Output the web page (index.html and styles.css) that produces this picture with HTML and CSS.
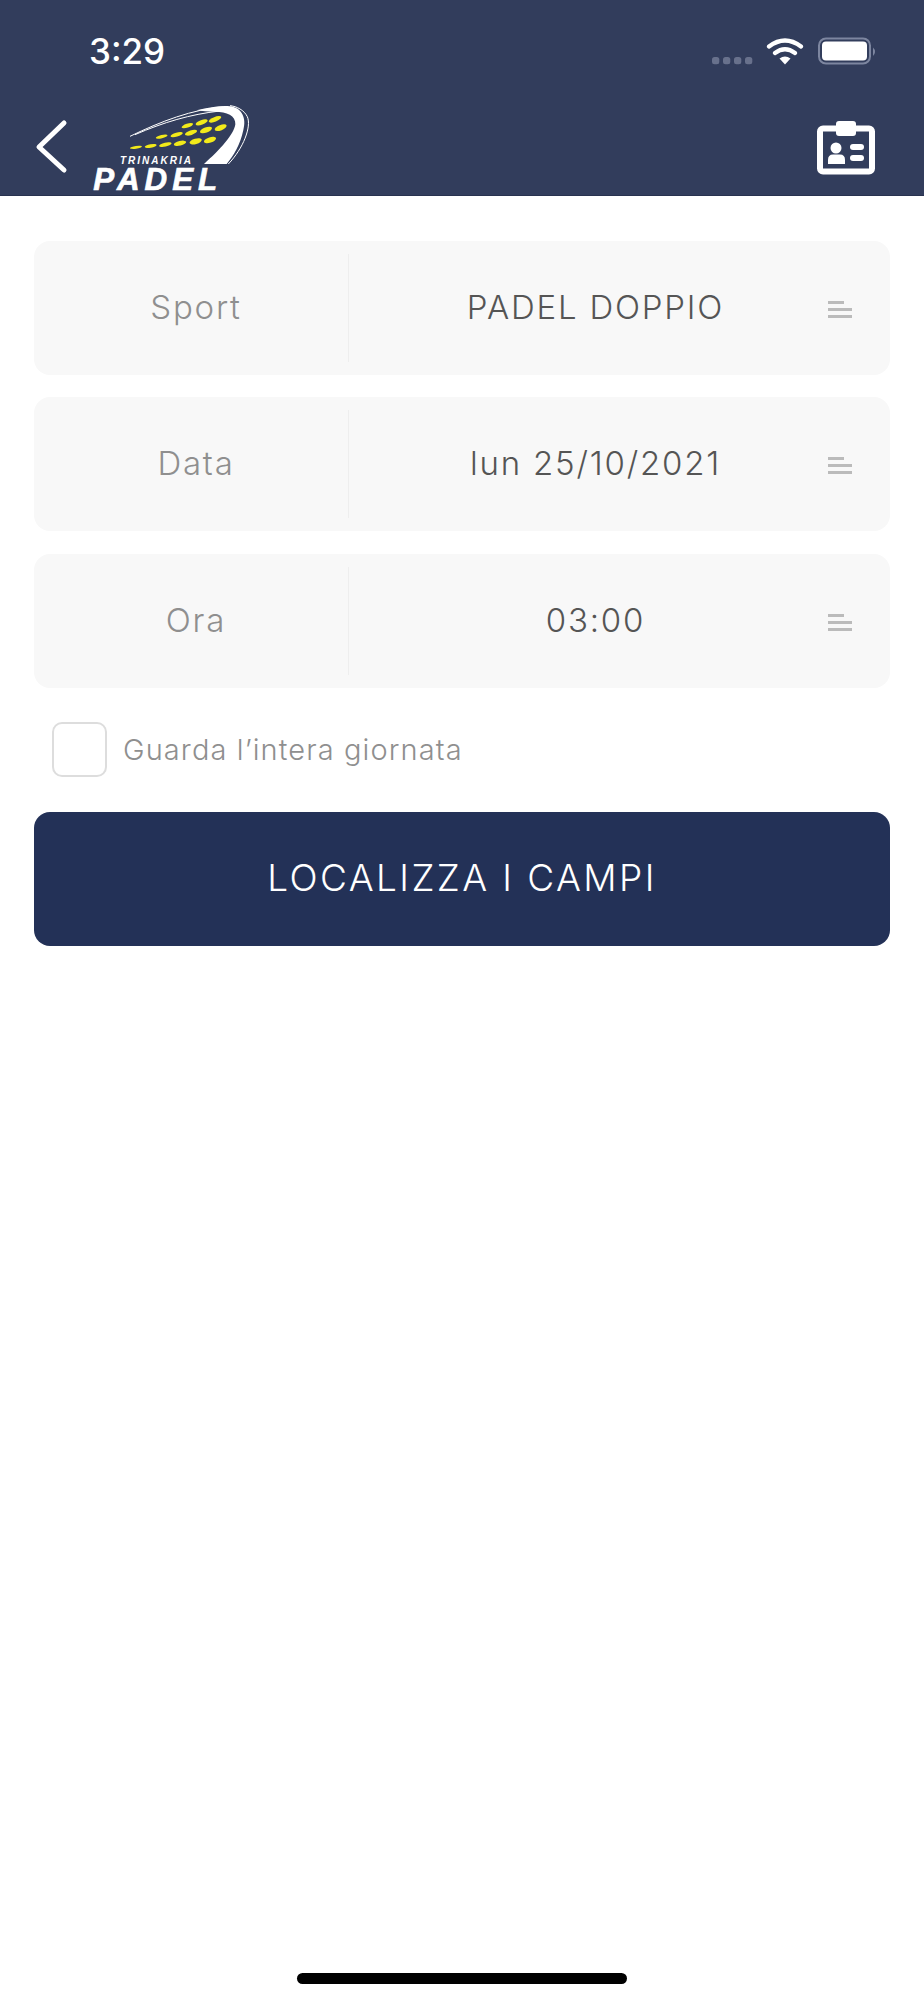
FILE: index.html
```html
<!DOCTYPE html>
<html lang="it">
<head>
    <meta charset="UTF-8">
    <meta name="viewport" content="width=device-width, initial-scale=1.0">
    <title>Trinakria Padel</title>
    <link rel="stylesheet" href="styles.css">
</head>
<body>
    <header class="top">
        <div class="status">
            <span class="time">3:29</span>
            <svg class="status-icons" width="165" height="30" viewBox="0 0 165 30">
                <rect x="0" y="21" width="7.3" height="7.3" rx="2.5" fill="#68718c"/>
                <rect x="11" y="21" width="7.3" height="7.3" rx="2.5" fill="#68718c"/>
                <rect x="22" y="21" width="7.3" height="7.3" rx="2.5" fill="#68718c"/>
                <rect x="33" y="21" width="7.3" height="7.3" rx="2.5" fill="#68718c"/>
                <path d="M57 10.5Q73-1.5 89 10.5M63 17Q73 9.5 83 17" fill="none" stroke="#fff" stroke-width="4.2" stroke-linecap="round"/>
                <path d="M67.5 22.5Q73 18.5 78.500 22.500L73 28.500Z" fill="#fff"/>
                <rect x="107" y="2.500" width="51" height="25" rx="7" fill="none" stroke="#7d86a0" stroke-width="2"/>
                <rect x="110" y="5.500" width="45" height="19" rx="4" fill="#fff"/>
                <path d="M161 11.500Q165 15.500 161 20Z" fill="#7d86a0"/>
            </svg>
        </div>
        <nav class="nav">
            <svg class="back" width="36" height="56" viewBox="0 0 36 56">
                <path d="M31 4 6 28 31 51" fill="none" stroke="#fff" stroke-width="5" stroke-linecap="round" stroke-linejoin="round"/>
            </svg>
            <svg class="logo" width="180" height="100" viewBox="0 0 540 300">
                <!-- racchetta -->
                <path d="M350 46C390 36 425 31 450 34C486 38 500 70 490 105C480 150 462 180 440 207L372 207C420 165 462 118 466 88C468 62 440 50 405 50C385 50 365 48 350 46Z" fill="#fff"/>
                <path d="M150 124C240 80 340 42 430 36M165 119C250 82 330 58 420 48M445 207C490 160 515 95 502 65C492 45 470 34 450 32" fill="none" stroke="#fff" stroke-width="3"/>
                <g fill="#f2ea1a">
                    <ellipse cx="405" cy="73" rx="20" ry="7" transform="rotate(-22 405 73)"/>
                    <ellipse cx="365" cy="82" rx="19" ry="7" transform="rotate(-20 365 82)"/>
                    <ellipse cx="322" cy="92" rx="18" ry="6" transform="rotate(-18 322 92)"/>
                    <ellipse cx="422" cy="98" rx="19" ry="8" transform="rotate(-22 422 98)"/>
                    <ellipse cx="378" cy="105" rx="19" ry="8" transform="rotate(-20 378 105)"/>
                    <ellipse cx="333" cy="113" rx="19" ry="7" transform="rotate(-18 333 113)"/>
                    <ellipse cx="290" cy="119" rx="19" ry="6" transform="rotate(-16 290 119)"/>
                    <ellipse cx="245" cy="125" rx="18" ry="5" transform="rotate(-14 245 125)"/>
                    <ellipse cx="390" cy="135" rx="19" ry="8" transform="rotate(-18 390 135)"/>
                    <ellipse cx="347" cy="139" rx="19" ry="8" transform="rotate(-16 347 139)"/>
                    <ellipse cx="300" cy="145" rx="19" ry="7" transform="rotate(-14 300 145)"/>
                    <ellipse cx="256" cy="149" rx="19" ry="6" transform="rotate(-12 256 149)"/>
                    <ellipse cx="212" cy="153" rx="18" ry="5" transform="rotate(-10 212 153)"/>
                    <ellipse cx="168" cy="157" rx="18" ry="4" transform="rotate(-8 168 157)"/>
                </g>
                <text class="logo-small" x="120" y="207">TRINAKRIA</text>
                <text class="logo-big" x="40" y="286">PADEL</text>
            </svg>
            <svg class="card" width="58" height="54" viewBox="0 0 58 54">
                <rect x="3" y="7.500" width="52" height="43" rx="3" fill="none" stroke="#fff" stroke-width="6"/>
                <rect x="19" y="0" width="20" height="15" rx="3" fill="#fff"/>
                <circle cx="19" cy="27" r="5.500" fill="#fff"/>
                <path d="M11 43V39Q11 33.500 16 33.500H23Q28 33.500 28 39V43Z" fill="#fff"/>
                <rect x="33" y="23" width="14" height="6" rx="3" fill="#fff"/>
                <rect x="33" y="34" width="14" height="6" rx="3" fill="#fff"/>
            </svg>
        </nav>
    </header>

    <main class="form">
        <div class="row">
            <div class="row-label">Sport</div>
            <div class="row-value">PADEL DOPPIO</div>
            <span class="menu"><i class="short"></i><i></i><i></i></span>
        </div>
        <div class="row">
            <div class="row-label">Data</div>
            <div class="row-value">lun 25/10/2021</div>
            <span class="menu"><i class="short"></i><i></i><i></i></span>
        </div>
        <div class="row">
            <div class="row-label">Ora</div>
            <div class="row-value">03:00</div>
            <span class="menu"><i class="short"></i><i></i><i></i></span>
        </div>
        <label class="check">
            <span class="box"></span>
            Guarda l’intera giornata
        </label>
        <button class="cta">LOCALIZZA I CAMPI</button>
    </main>

    <div class="home"></div>
</body>
</html>
```

FILE: styles.css
```css
body {
    font-family: Inter, "Liberation Sans", sans-serif;
    background-color: #fff;
    margin: 0;
    min-height: 2000px;
    display: flex;
    flex-direction: column;
}

.top {
    height: 196px;
    background-color: #323d5c;
    border-bottom: 1px solid #28324f;
    box-sizing: border-box;
    color: #fff;
}

.status {
    height: 92px;
    display: flex;
    justify-content: space-between;
    align-items: flex-start;
    padding: 0 47px 0 89px;
}

.time {
    margin-top: 33px;
    font-size: 35px;
    line-height: 36px;
    font-weight: 500;
}

.status-icons {
    margin-top: 36px;
}

.nav {
    display: flex;
    align-items: flex-start;
    padding-left: 33px;
    padding-right: 49px;
}

.back {
    margin-top: 27px;
    margin-right: 11px;
}

.logo {
    margin-top: 3px;
    overflow: visible;
}

.logo-small {
    font-family: "Liberation Sans", sans-serif;
    font-size: 30px;
    font-weight: bold;
    font-style: italic;
    letter-spacing: 6px;
    fill: #fff;
}

.logo-big {
    font-family: "Liberation Sans", sans-serif;
    font-size: 94px;
    font-weight: bold;
    font-style: italic;
    letter-spacing: 15px;
    fill: #fff;
    stroke: #fff;
    stroke-width: 2px;
}

.card {
    margin-top: 29px;
    margin-left: auto;
}

.form {
    padding: 45px 34px 0;
    display: flex;
    flex-direction: column;
}

.row {
    height: 134px;
    box-sizing: border-box;
    padding: 13px 38px 13px 10px;
    margin-bottom: 22.400px;
    background-color: #f8f8f8;
    border-radius: 16px;
    display: flex;
    align-items: stretch;
}

.row-label {
    width: 305px;
    border-right: 1px solid #eee;
    display: flex;
    align-items: center;
    justify-content: center;
    padding-bottom: 2px;
    box-sizing: border-box;
    font-size: 33px;
    font-weight: 300;
    letter-spacing: 1.800px;
    color: #8f8f8f;
}

.row-value {
    flex: 1;
    padding-left: 14px;
    padding-bottom: 2px;
    display: flex;
    align-items: center;
    justify-content: center;
    font-size: 33px;
    font-weight: 300;
    letter-spacing: 1.800px;
    color: #555;
}

.menu {
    width: 24px;
    align-self: center;
    margin-top: 3px;
    display: flex;
    flex-direction: column;
    gap: 4px;
}

.menu i {
    display: block;
    height: 3px;
    background-color: #bbb;
}

.menu i.short {
    width: 16px;
}

.check {
    display: flex;
    align-items: center;
    gap: 16px;
    margin: 12px 0 35px 18px;
    font-size: 29px;
    font-weight: 300;
    letter-spacing: 1.100px;
    color: #8f8f8f;
}

.box {
    width: 55px;
    height: 55px;
    box-sizing: border-box;
    border: 2px solid #ddd;
    border-radius: 10px;
}

.cta {
    height: 134px;
    border: 0;
    border-radius: 16px;
    padding-bottom: 4px;
    background-color: #233157;
    color: #fff;
    font-family: inherit;
    font-size: 37px;
    font-weight: 300;
    letter-spacing: 2.400px;
}

.home {
    width: 330px;
    height: 11px;
    margin: auto auto 16px;
    background-color: #000;
    border-radius: 6px;
}
```
